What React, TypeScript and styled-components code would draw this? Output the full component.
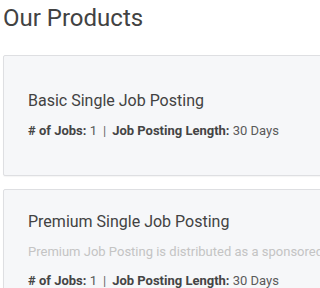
import React from "react";
import styled, { createGlobalStyle } from "styled-components";

const GlobalStyle = createGlobalStyle`
    html, body {
        margin: 0;
        padding: 0;
        background: #ffffff;
        overflow: hidden;
    }

    body {
        font-family: Roboto, "Liberation Sans", Arial, sans-serif;
        color: #444444;
    }
`;

const Page = styled.div`
    width: 100vw;
    height: 100vh;
    overflow: hidden;
    padding: 4px 0 0 3px;
    box-sizing: border-box;
`;

const Title = styled.h2`
    margin: 0 0 22px 0;
    font-size: 24px;
    line-height: 1.2;
    font-weight: 400;
    color: #424242;
`;

const ProductList = styled.div`
    display: flex;
    flex-direction: column;
    gap: 13px;
    width: 640px;
`;

const ProductCard = styled.div`
    display: flex;
    align-items: center;
    box-sizing: border-box;
    min-height: 121px;
    padding: 20px 24px;
    background: #f6f7f9;
    border: 1px solid #dedfe2;
    border-radius: 2px;
    box-shadow: 0 1px 1px rgba(0, 0, 0, 0.04);
`;

const ProductInfo = styled.div`
    flex: 1;
    min-width: 0;
`;

const ProductName = styled.h3`
    margin: 0 0 8px 0;
    font-size: 16px;
    line-height: 24px;
    font-weight: 400;
    color: #424242;
`;

const Description = styled.p`
    margin: 0 0 9px 0;
    font-size: 13px;
    line-height: 20px;
    color: #c4c4c4;
    white-space: nowrap;
`;

const Meta = styled.div`
    font-size: 13px;
    line-height: 20px;
    color: #5a5a5a;
    white-space: nowrap;
`;

const Label = styled.span`
    font-weight: 700;
    color: #444444;
`;

const Divider = styled.span`
    margin: 0 6px;
    color: #6a6a6a;
`;

interface Product {
    name: string;
    description?: string;
    jobs: number;
    length: string;
}

const products: Product[] = [
    { name: "Basic Single Job Posting", jobs: 1, length: "30 Days" },
    {
        name: "Premium Single Job Posting",
        description:
            "Premium Job Posting is distributed as a sponsored job across our partner network.",
        jobs: 1,
        length: "30 Days",
    },
];

const App: React.FC = () => {
    return (
        <>
            <GlobalStyle />
            <Page>
                <Title>Our Products</Title>
                <ProductList>
                    {products.map((product) => (
                        <ProductCard key={product.name}>
                            <ProductInfo>
                                <ProductName>{product.name}</ProductName>
                                {product.description && (
                                    <Description>{product.description}</Description>
                                )}
                                <Meta>
                                    <Label># of Jobs:</Label> {product.jobs}
                                    <Divider>|</Divider>
                                    <Label>Job Posting Length:</Label> {product.length}
                                </Meta>
                            </ProductInfo>
                        </ProductCard>
                    ))}
                </ProductList>
            </Page>
        </>
    );
};

export default App;
